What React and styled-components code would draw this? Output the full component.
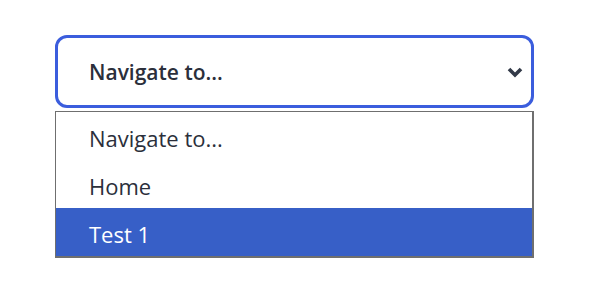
import styled, { createGlobalStyle } from "styled-components";

const Global = createGlobalStyle`
  body {
    margin: 0;
    background: #ffffff;
    font-family: "Open Sans", "Noto Sans", sans-serif;
  }
`;

const Page = styled.div`
  padding: 35px 0 0 55px;
`;

const Wrapper = styled.div`
  width: 479px;
  display: flex;
  flex-direction: column;
  gap: 3px;
`;

const SelectBox = styled.div`
  height: 73px;
  box-sizing: border-box;
  border: 3px solid #3b5ddd;
  border-radius: 12px;
  display: flex;
  align-items: center;
  justify-content: space-between;
  padding: 0 7px 0 31px;
  font-size: 21px;
  font-weight: 600;
  color: #2b2f3b;
`;

const Chevron = styled.svg`
  width: 18px;
  height: 12px;
`;

const List = styled.div`
  border: 2px solid #6f6f6f;
  border-width: 1px 2px 2px 1px;
  display: flex;
  flex-direction: column;
`;

const Option = styled.div`
  height: 48px;
  display: flex;
  align-items: center;
  padding: 3px 0 0 33px;
  box-sizing: border-box;
  font-size: 22px;
  color: ${(p) => (p.$active ? "#ffffff" : "#2b2f3b")};
  background: ${(p) => (p.$active ? "#375fc7" : "#ffffff")};
`;

const options = ["Navigate to...", "Home", "Test 1"];

export default function App() {
  return (
    <Page>
      <Global />
      <Wrapper>
        <SelectBox>
          <span>Navigate to...</span>
          <Chevron viewBox="0 0 18 12">
            <path d="M3 3 L9 9 L15 3" fill="none" stroke="#333a48" strokeWidth="3.6" />
          </Chevron>
        </SelectBox>
        <List>
          {options.map((o, i) => (
            <Option key={o} $active={i === 2}>
              {o}
            </Option>
          ))}
        </List>
      </Wrapper>
    </Page>
  );
}
